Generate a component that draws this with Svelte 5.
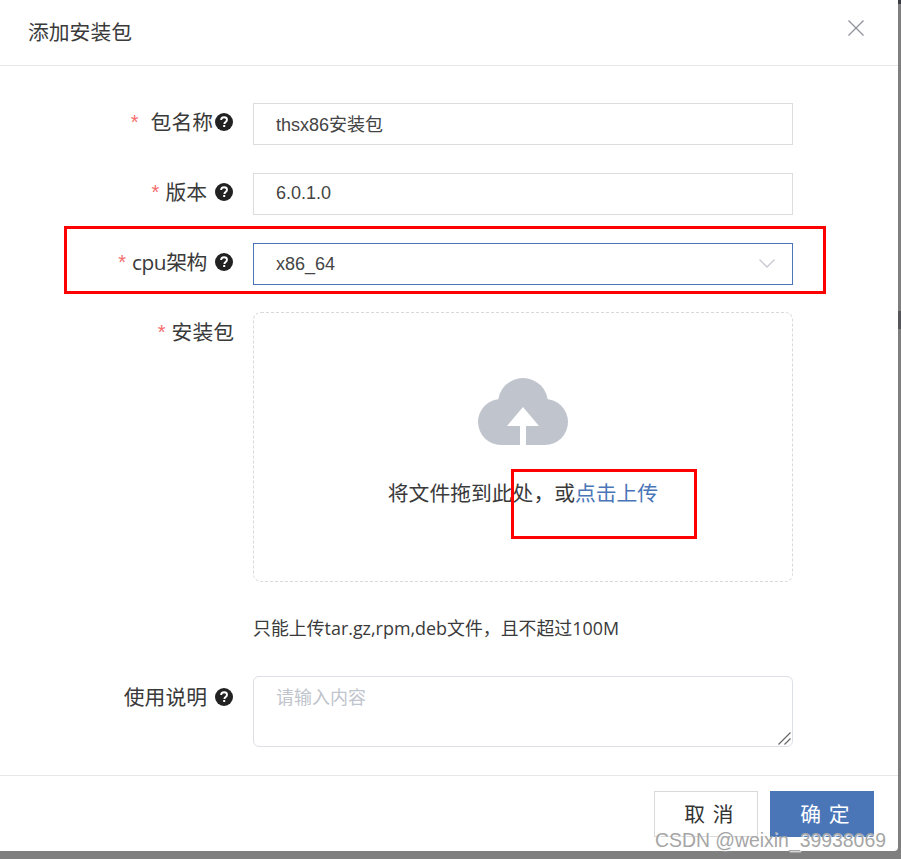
<script>
	const fields = [
		{ label: '包名称', value: 'thsx86安装包', tight: true },
		{ label: '版本', value: '6.0.1.0' }
	];
</script>

{#snippet help()}
	<svg class="help" viewBox="0 0 18 18" aria-hidden="true">
		<circle cx="9" cy="9" r="9" fill="#222" />
		<path d="M6.1 7.1c0-1.8 1.3-2.9 3-2.9s2.9 1 2.9 2.5c0 1.2-.6 1.8-1.5 2.4-.8.5-1.1.9-1.1 1.8" fill="none" stroke="#fff" stroke-width="1.9" />
		<rect x="8.2" y="12" width="2" height="2" fill="#fff" />
	</svg>
{/snippet}

<div class="dialog">
	<header class="head">
		<h2>添加安装包</h2>
		<button class="close" type="button" aria-label="关闭">
			<svg viewBox="0 0 16 16" width="16" height="16"><path d="M.5.5l15 15M15.5.5l-15 15" stroke="#8f939b" stroke-width="1.3" fill="none" /></svg>
		</button>
	</header>

	<div class="body">
		{#each fields as f}
			<div class="row">
				<div class="label">
					<span class="star" class:wide={f.tight}>*</span><span class="text" class:tight={f.tight}>{f.label}</span>{@render help()}
				</div>
				<input class="input" value={f.value} />
			</div>
		{/each}

		<div class="row">
			<div class="label">
				<span class="star">*</span><span class="text latin">cpu架构</span>{@render help()}
			</div>
			<div class="input select">
				<span>x86_64</span>
				<svg viewBox="0 0 16 9" width="16" height="9"><path d="M.5.5L8 8l7.500-7.500" stroke="#c6c9d0" stroke-width="1.3" fill="none" /></svg>
			</div>
		</div>

		<div class="row upload-row">
			<div class="label">
				<span class="star">*</span><span class="text plain">安装包</span>
			</div>
			<div class="upload">
				<svg class="cloud" viewBox="0 0 90 67" width="90" height="67">
					<g fill="#c0c4cc">
						<circle cx="45" cy="25" r="25" />
						<circle cx="23" cy="44" r="23" />
						<circle cx="67" cy="44" r="23" />
						<rect x="23" y="25" width="44" height="42" />
					</g>
					<path d="M45 29l16 19H48v19h-6V48H29z" fill="#fff" />
				</svg>
				<p>将文件拖到此处，或<em>点击上传</em></p>
			</div>
		</div>

		<div class="hint">只能上传tar.gz,rpm,deb文件，且不超过100M</div>

		<div class="row notes-row">
			<div class="label">
				<span class="text">使用说明</span>{@render help()}
			</div>
			<div class="area-wrap">
				<textarea class="area" placeholder="请输入内容"></textarea>
				<svg class="grip" viewBox="0 0 13 13" width="13" height="13"><path d="M.5 12.500L12.500.5M6.500 12.500l6-6" stroke="#666" stroke-width="1.2" fill="none" /></svg>
			</div>
		</div>
	</div>

	<footer class="foot">
		<button class="btn" type="button">取 消</button>
		<button class="btn primary" type="button">确 定</button>
	</footer>
</div>

<div class="edge top"></div>
<div class="edge mid"></div>
<div class="mark one"></div>
<div class="mark two"></div>
<div class="csdn">CSDN @weixin_39938069</div>

<style>
	:global(body) {
		background: #7f7f7f;
		height: 859px;
		overflow: hidden;
	}

	.dialog {
		width: 898px;
		height: 851px;
		background: #fff;
		border-radius: 0 0 4px 0;
		display: flex;
		flex-direction: column;
		font-family: 'Liberation Sans', 'Noto Sans CJK SC', sans-serif;
		color: #303133;
	}

	.head {
		height: 65px;
		flex: none;
		border-bottom: 1px solid #e8e8e8;
		display: flex;
		align-items: center;
		justify-content: space-between;
		padding: 0 34px 0 28px;
	}

	.head h2 {
		margin: -3px 0 0;
		font-size: 20.8px;
		font-weight: 400;
		font-family: 'Noto Sans CJK SC', sans-serif;
		color: #3a3a3a;
	}

	.close {
		background: none;
		border: none;
		padding: 0;
		display: flex;
		margin-top: -9px;
	}

	.body {
		flex: 1;
		padding-top: 37px;
	}

	.row {
		display: flex;
		margin-bottom: 28px;
	}

	.label {
		width: 233px;
		height: 42px;
		margin-right: 20px;
		display: flex;
		justify-content: flex-end;
		align-items: center;
		font-size: 20.8px;
		font-family: 'Noto Sans CJK SC', sans-serif;
		color: #3a3a3a;
		flex: none;
	}

	.star {
		color: #f56c6c;
		font-family: 'Liberation Sans', sans-serif;
		font-size: 20px;
		line-height: 20px;
		margin-right: 6px;
		margin-bottom: 5px;
	}

	.star.wide {
		margin-right: 12px;
	}

	.text {
		margin-right: 8px;
		margin-bottom: 6px;
		white-space: nowrap;
	}

	.text.tight {
		margin-right: 2px;
	}

	.text.plain {
		margin-right: -1px;
	}

	.text.latin {
		font-family: 'Open Sans', 'Noto Sans CJK SC', sans-serif;
		letter-spacing: -0.4px;
	}

	.help {
		width: 18px;
		height: 18px;
		flex: none;
		margin-bottom: 4px;
	}

	.input {
		width: 540px;
		height: 42px;
		box-sizing: border-box;
		border: 1px solid #dcdcdc;
		padding: 0 22px 2px;
		font-size: 18px;
		line-height: 22px;
		font-family: inherit;
		color: #444;
		background: #fff;
		outline: none;
	}

	.select {
		border-color: #4a76b8;
		display: flex;
		align-items: center;
		justify-content: space-between;
		padding: 0 17px 1px 22px;
	}

	.upload-row {
		margin-top: -1px;
		margin-bottom: 31px;
	}

	.upload-row .label {
		padding-top: 1px;
		box-sizing: content-box;
	}

	.notes-row .label {
		padding-top: 4px;
		height: 38px;
		box-sizing: content-box;
	}

	.upload {
		width: 540px;
		height: 270px;
		box-sizing: border-box;
		border: 1px dashed #d9d9d9;
		border-radius: 8px;
		display: flex;
		flex-direction: column;
		align-items: center;
		padding-top: 65px;
	}

	.cloud {
		display: block;
	}

	.upload p {
		margin: 32px 0 0;
		font-size: 20.8px;
		line-height: 30px;
		font-family: 'Noto Sans CJK SC', sans-serif;
		color: #3a3a3a;
	}

	.upload em {
		font-style: normal;
		color: #4a76b8;
	}

	.hint {
		margin: 0 0 33px 253px;
		height: 30px;
		line-height: 30px;
		font-size: 17.9px;
		font-family: 'Open Sans', 'Noto Sans CJK SC', sans-serif;
		color: #3a3a3a;
	}

	.area-wrap {
		position: relative;
		width: 540px;
		height: 71px;
	}

	.area {
		width: 540px;
		height: 71px;
		box-sizing: border-box;
		border: 1px solid #dcdfe6;
		border-radius: 6px;
		padding: 5px 22px;
		font-size: 18px;
		line-height: 28px;
		font-family: 'Noto Sans CJK SC', sans-serif;
		outline: none;
		margin: 0;
		display: block;
		resize: none;
	}

	.area::placeholder {
		color: #c0c4cc;
	}

	.grip {
		position: absolute;
		right: 2px;
		bottom: 2px;
	}

	.foot {
		height: 77px;
		flex: none;
		box-sizing: border-box;
		border-top: 1px solid #e8e8e8;
		padding: 15px 24px 0 0;
		display: flex;
		justify-content: flex-end;
		gap: 12px;
		align-items: flex-start;
	}

	.btn {
		width: 104px;
		height: 46px;
		border: 1px solid #d9d9d9;
		background: #fff;
		font-size: 20.8px;
		word-spacing: 3px;
		font-family: 'Noto Sans CJK SC', sans-serif;
		color: #333;
		padding: 0 0 2px 6px;
	}

	.btn.primary {
		background: #4a76b8;
		border-color: #4a76b8;
		color: #fff;
	}

	.edge {
		position: absolute;
		left: 898px;
		width: 3px;
		background: #3a3d44;
	}

	.edge.top {
		top: 0;
		height: 4px;
	}

	.edge.mid {
		top: 311px;
		height: 18px;
		background: #55565a;
	}

	.mark {
		position: absolute;
		box-sizing: border-box;
		border: 3px solid #f00;
	}

	.mark.one {
		left: 64px;
		top: 226px;
		width: 762px;
		height: 68px;
	}

	.mark.two {
		left: 511px;
		top: 469px;
		width: 186px;
		height: 70px;
	}

	.csdn {
		position: absolute;
		left: 655px;
		top: 829px;
		font-family: 'Liberation Sans', sans-serif;
		font-size: 19.400px;
		line-height: 22px;
		color: #a6a6a6;
		text-shadow: 1px 1px 1px #fff;
		white-space: nowrap;
	}
</style>
